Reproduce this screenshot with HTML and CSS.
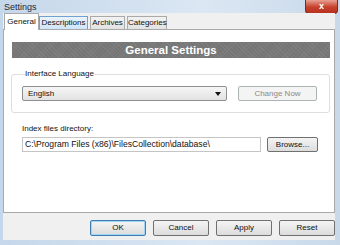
FILE: index.html
```html
<!DOCTYPE html>
<html lang="en">
<head>
    <meta charset="UTF-8">
    <title>Settings</title>
    <link rel="stylesheet" href="styles.css">
</head>
<body>
    <div class="window">
        <div class="titlebar">
            <span class="title">Settings</span>
            <span class="close">x</span>
        </div>
        <div class="client">
            <div class="tabs">
                <div class="tab active">General</div>
                <div class="tab hover">Descriptions</div>
                <div class="tab archives">Archives</div>
                <div class="tab categories">Categories</div>
            </div>
            <div class="panel">
                <div class="header">General Settings</div>
                <fieldset class="group">
                    <legend>Interface Language</legend>
                    <div class="row">
                        <div class="select">
                            <span>English</span>
                            <span class="arrow"></span>
                        </div>
                        <button class="btn disabled change">Change Now</button>
                    </div>
                </fieldset>
                <div class="dir">
                    <label>Index files directory:</label>
                    <div class="row">
                        <div class="input">C:\Program Files (x86)\FilesCollection\database\</div>
                        <button class="btn browse">Browse...</button>
                    </div>
                </div>
            </div>
            <div class="footer">
                <button class="btn foot focus">OK</button>
                <button class="btn foot">Cancel</button>
                <button class="btn foot">Apply</button>
                <button class="btn foot">Reset</button>
            </div>
        </div>
    </div>
</body>
</html>
```

FILE: styles.css
```css
* {
    box-sizing: border-box;
}
body {
    margin: 0;
    font-family: "Liberation Sans", Arial, sans-serif;
    font-size: 8px;
    color: #111;
    background-color: #cddcec;
}
.window {
    width: 340px;
    height: 245px;
    display: flex;
    flex-direction: column;
    background: linear-gradient(90deg, #c5d7ea, #dbe7f3 60%, #c9d9ea);
    padding: 0 5px 5px 3px;
}
.titlebar {
    height: 13px;
    display: flex;
    align-items: flex-start;
    justify-content: space-between;
    flex-shrink: 0;
}
.title {
    margin: 2px 0 0 1px;
    font-size: 9px;
    line-height: 10px;
    color: #1e2a36;
}
.close {
    width: 33px;
    height: 14px;
    margin-right: -3px;
    background: linear-gradient(#e8a093, #c7402b 55%, #b7321f);
    border: 1px solid #7d2a1f;
    border-top: none;
    border-radius: 0 0 4px 4px;
    color: #fff;
    font-weight: bold;
    font-size: 9px;
    line-height: 12px;
    text-align: center;
}
.client {
    flex: 1;
    background-color: #f0f0f0;
    display: flex;
    flex-direction: column;
}
.tabs {
    display: flex;
    height: 16px;
    padding-left: 1px;
    align-items: flex-end;
    position: relative;
    z-index: 1;
}
.tab {
    height: 13px;
    line-height: 12px;
    margin-right: 2px;
    border: 1px solid #a9a9a9;
    border-bottom: none;
    background: linear-gradient(#f2f2f2, #e2e2e2);
    text-align: center;
    width: 49px;
}
.tab.hover {
    background: linear-gradient(#eaf4fc, #cfe5f8);
    border-color: #6ea1cf;
}
.tab.active {
    width: 35px;
    height: 17px;
    line-height: 15px;
    background: #fff;
    margin-right: 0;
    margin-bottom: -1px;
}
.tab.archives {
    width: 35px;
}
.tab.categories {
    width: 40px;
}
.panel {
    height: 184px;
    background-color: #fff;
    border: 1px solid #a9a9a9;
    padding: 12px 4px 0 8px;
}
.header {
    height: 16px;
    background-color: #7a7a7a;
    background-image: repeating-linear-gradient(45deg, rgba(255, 255, 255, 0.05) 0 1px, transparent 1px 3px),
        repeating-linear-gradient(-45deg, rgba(0, 0, 0, 0.06) 0 1px, transparent 1px 2px);
    color: #fff;
    font-weight: bold;
    font-size: 11.5px;
    line-height: 16px;
    text-align: center;
}
.group {
    margin: 11px 0 0 -1px;
    padding: 7px 12px 0 10px;
    border: 1px solid #dedede;
    border-radius: 3px;
    height: 44px;
}
.group legend {
    padding: 0;
    margin-left: 3px;
    line-height: 10px;
}
.row {
    display: flex;
    align-items: center;
}
.select {
    width: 205px;
    height: 15px;
    border: 1px solid #8e8f8f;
    border-radius: 2px;
    background: linear-gradient(#f6f6f6, #e2e2e2);
    display: flex;
    align-items: center;
    justify-content: space-between;
    padding: 0 5px;
}
.arrow {
    width: 0;
    height: 0;
    border-left: 3px solid transparent;
    border-right: 3px solid transparent;
    border-top: 4px solid #111;
}
.btn {
    font-family: "Liberation Sans", Arial, sans-serif;
    font-size: 8px;
    color: #111;
    height: 15px;
    padding: 0;
    border: 1px solid #707070;
    border-radius: 2px;
    background: linear-gradient(#f4f4f4, #dcdcdc);
    line-height: 12px;
}
.btn.disabled {
    color: #8a8a8a;
    border-color: #adb2b5;
    background: #f4f4f4;
}
.change {
    width: 79px;
    margin-left: 11px;
}
.dir {
    margin: 11px 0 0 10px;
}
.dir label {
    display: block;
    line-height: 10px;
    margin-bottom: 3px;
}
.input {
    width: 239px;
    height: 15px;
    border: 1px solid #c5c5c5;
    padding: 0 2px;
    line-height: 13px;
    font-size: 8.6px;
    white-space: nowrap;
    overflow: hidden;
}
.browse {
    width: 51px;
    margin-left: 6px;
}
.footer {
    flex: 1;
    display: flex;
    justify-content: flex-end;
    align-items: flex-start;
    padding: 7px 0 0 0;
    gap: 7px;
}
.foot {
    width: 56px;
    height: 16px;
}
.focus {
    border-color: #3c7fb1;
    box-shadow: inset 0 0 0 1px #9fd5f4;
}
```
